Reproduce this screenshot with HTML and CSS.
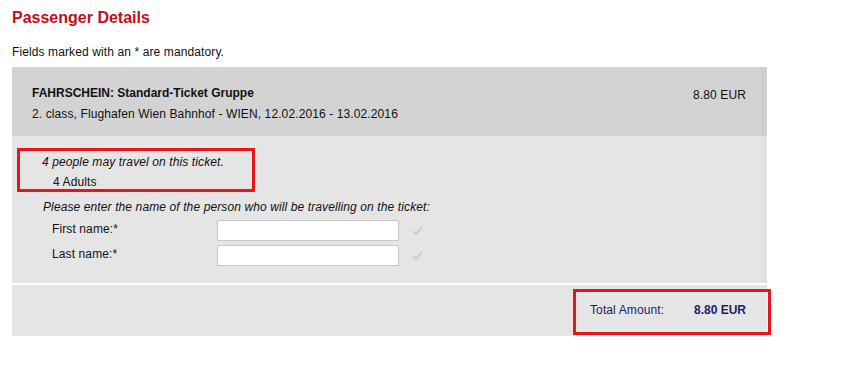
FILE: index.html
```html
<!DOCTYPE html>
<html>
<head>
<meta charset="utf-8">
<link rel="stylesheet" href="styles.css">
</head>
<body>
<div class="page">
  <h1 class="title">Passenger Details</h1>
  <p class="note">Fields marked with an * are mandatory.</p>
  <div class="ticket">
    <div class="ticket-head">
      <div class="head-info">
        <div class="ticket-name">FAHRSCHEIN: Standard-Ticket Gruppe</div>
        <div class="ticket-route">2. class, Flughafen Wien Bahnhof - WIEN, 12.02.2016 - 13.02.2016</div>
      </div>
      <div class="ticket-price">8.80 EUR</div>
    </div>
    <div class="ticket-body">
      <div class="travellers">
        <div class="travellers-line">4 people may travel on this ticket.</div>
        <div class="travellers-count">4 Adults</div>
      </div>
      <div class="prompt">Please enter the name of the person who will be travelling on the ticket:</div>
      <div class="field">
        <label class="field-label">First name:*</label>
        <input class="field-input" type="text">
        <svg class="check" width="11" height="9" viewBox="0 0 11 9"><path d="M1 5 L4 8 L10 1" fill="none" stroke="#c9c9c9" stroke-width="1.6"/></svg>
      </div>
      <div class="field">
        <label class="field-label">Last name:*</label>
        <input class="field-input" type="text">
        <svg class="check" width="11" height="9" viewBox="0 0 11 9"><path d="M1 5 L4 8 L10 1" fill="none" stroke="#c9c9c9" stroke-width="1.6"/></svg>
      </div>
    </div>
    <div class="ticket-total">
      <span class="total-label">Total Amount:</span>
      <span class="total-value">8.80 EUR</span>
      <div class="highlight-total"></div>
    </div>
  </div>
</div>
</body>
</html>
```
FILE: styles.css
```css
html, body {
  margin: 0;
  padding: 0;
  background: #ffffff;
}
body {
  font-family: "Liberation Sans", Arial, sans-serif;
  font-size: 12px;
  letter-spacing: 0.11px;
  color: #111111;
}
.page {
  padding: 0 12px;
  width: 755px;
}
.title {
  margin: 0;
  padding-top: 8px;
  font-size: 16px;
  line-height: 19px;
  font-weight: bold;
  letter-spacing: 0;
  color: #c20e1a;
}
.note {
  margin: 0;
  padding-top: 18px;
  line-height: 14px;
  height: 22px;
}
.ticket {
  width: 755px;
}
.ticket-head {
  background: #d3d3d3;
  height: 69px;
  box-sizing: border-box;
  padding: 19px 15px 0 20px;
  display: flex;
  justify-content: space-between;
  border-right: 6px solid #cfcfcf;
}
.ticket-name {
  font-weight: bold;
  line-height: 14px;
  letter-spacing: 0;
}
.ticket-route {
  margin-top: 7px;
  line-height: 14px;
}
.ticket-price {
  padding-top: 2px;
  line-height: 14px;
}
.ticket-body {
  background: #e5e5e5;
  height: 147px;
  box-sizing: border-box;
  padding: 12px 0 0 5px;
  border-right: 6px solid #e1e1e1;
}
.travellers {
  height: 34px;
  width: 210px;
  border: 3px solid #e8141c;
  padding: 4px 0 0 22px;
}
.travellers-line {
  font-style: italic;
  line-height: 14px;
}
.travellers-count {
  margin-top: 6px;
  padding-left: 11px;
  line-height: 14px;
}
.prompt {
  margin-top: 8px;
  padding-left: 26px;
  font-style: italic;
  line-height: 14px;
}
.field {
  display: flex;
  align-items: center;
  height: 25px;
  padding-left: 35px;
}
.prompt + .field { margin-top: 4px; }
.field-label {
  width: 165px;
  line-height: 14px;
  position: relative;
  top: -2px;
}
.field-input {
  width: 182px;
  height: 21px;
  box-sizing: border-box;
  margin: 0;
  border: 1px solid #c8c8c8;
  background: #ffffff;
  padding: 0 3px;
}
.check {
  margin-left: 13px;
}
.ticket-total {
  position: relative;
  margin-top: 2px;
  background: #e5e5e5;
  height: 51px;
  box-sizing: border-box;
  padding-top: 18px;
  display: flex;
  justify-content: flex-end;
  color: #1c1c6b;
  line-height: 14px;
}
.total-label {
  width: 104px;
}
.total-value {
  font-weight: bold;
  letter-spacing: 0;
  width: 73px;
}
.highlight-total {
  position: absolute;
  left: 561px;
  top: 4px;
  width: 192px;
  height: 40px;
  border: 3px solid #e8141c;
}
```
